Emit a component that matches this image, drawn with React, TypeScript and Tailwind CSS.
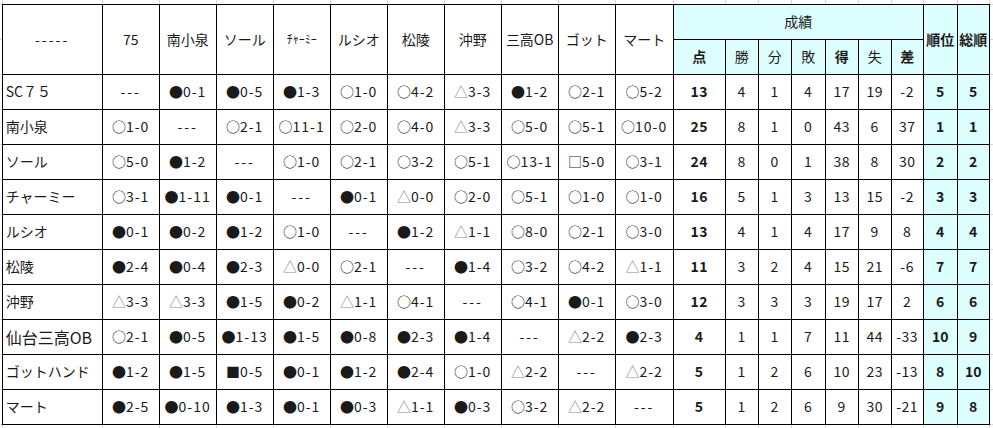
import React from "react";

const cols =
  "grid-cols-[99px_56px_56px_56px_56px_56px_56px_56px_56px_56px_57px_51px_32px_32px_33px_32px_32px_31px_33px_31px]";

const heads = ["75", "南小泉", "ソール", "ﾁｬｰﾐｰ", "ルシオ", "松陵", "沖野", "三高OB", "ゴット", "マート"];

// team, results vs each team, [点 勝 分 敗 得 失 差], 順位, 総順
const rows: { team: string; res: string[]; stats: string[]; rank: string; total: string }[] = [
  { team: "SC７５", res: ["---", "●0-1", "●0-5", "●1-3", "○1-0", "○4-2", "△3-3", "●1-2", "○2-1", "○5-2"], stats: ["13", "4", "1", "4", "17", "19", "-2"], rank: "5", total: "5" },
  { team: "南小泉", res: ["○1-0", "---", "○2-1", "○11-1", "○2-0", "○4-0", "△3-3", "○5-0", "○5-1", "○10-0"], stats: ["25", "8", "1", "0", "43", "6", "37"], rank: "1", total: "1" },
  { team: "ソール", res: ["○5-0", "●1-2", "---", "○1-0", "○2-1", "○3-2", "○5-1", "○13-1", "□5-0", "○3-1"], stats: ["24", "8", "0", "1", "38", "8", "30"], rank: "2", total: "2" },
  { team: "チャーミー", res: ["○3-1", "●1-11", "●0-1", "---", "●0-1", "△0-0", "○2-0", "○5-1", "○1-0", "○1-0"], stats: ["16", "5", "1", "3", "13", "15", "-2"], rank: "3", total: "3" },
  { team: "ルシオ", res: ["●0-1", "●0-2", "●1-2", "○1-0", "---", "●1-2", "△1-1", "○8-0", "○2-1", "○3-0"], stats: ["13", "4", "1", "4", "17", "9", "8"], rank: "4", total: "4" },
  { team: "松陵", res: ["●2-4", "●0-4", "●2-3", "△0-0", "○2-1", "---", "●1-4", "○3-2", "○4-2", "△1-1"], stats: ["11", "3", "2", "4", "15", "21", "-6"], rank: "7", total: "7" },
  { team: "沖野", res: ["△3-3", "△3-3", "●1-5", "●0-2", "△1-1", "○4-1", "---", "○4-1", "●0-1", "○3-0"], stats: ["12", "3", "3", "3", "19", "17", "2"], rank: "6", total: "6" },
  { team: "仙台三高OB", res: ["○2-1", "●0-5", "●1-13", "●1-5", "●0-8", "●2-3", "●1-4", "---", "△2-2", "●2-3"], stats: ["4", "1", "1", "7", "11", "44", "-33"], rank: "10", total: "9" },
  { team: "ゴットハンド", res: ["●1-2", "●1-5", "■0-5", "●0-1", "●1-2", "●2-4", "○1-0", "△2-2", "---", "△2-2"], stats: ["5", "1", "2", "6", "10", "23", "-13"], rank: "8", total: "10" },
  { team: "マート", res: ["●2-5", "●0-10", "●1-3", "●0-1", "●0-3", "△1-1", "●0-3", "○3-2", "△2-2", "---"], stats: ["5", "1", "2", "6", "9", "30", "-21"], rank: "9", total: "8" },
];

const Result = ({ v }: { v: string }) => {
  if (v === "---") return <span className="tracking-[2px]">---</span>;
  const sym = v[0];
  return (
    <span className="flex items-center">
      <span className={sym === "△" ? "text-[#8a8a8a]" : ""}>{sym}</span>
      <span className="tracking-[1px]">{v.slice(1)}</span>
    </span>
  );
};

const App: React.FC = () => {
  return (
    <div className="w-[993px] h-[428px] bg-white flex flex-col overflow-hidden font-['Noto_Sans_CJK_JP',sans-serif] text-[14px] text-[#1a1a1a]">
      {/* gridlines above the table */}
      <div className="flex h-[4px]">
        <div className="w-[2px]" />
        <div className={`grid ${cols} gap-x-px px-px bg-[#d6d6d6]`}>
          {Array.from({ length: 20 }).map((_, i) => (
            <div key={i} className="bg-white" />
          ))}
        </div>
      </div>

      <div className="flex">
        {/* left gridlines */}
        <div className="w-[2px] grid grid-rows-[repeat(12,34px)] gap-y-px py-px bg-[#d6d6d6]">
          {Array.from({ length: 12 }).map((_, i) => (
            <div key={i} className="bg-white" />
          ))}
        </div>

        {/* Standings table */}
        <div className={`grid ${cols} grid-rows-[repeat(12,34px)] gap-px p-px bg-black`}>
          <div className="row-span-2 bg-white flex items-center justify-center tracking-[2px]">-----</div>
          {heads.map((h, i) => (
            <div
              key={i}
              className={`row-span-2 bg-white flex items-center justify-center whitespace-nowrap ${h === "ﾁｬｰﾐｰ" ? "text-[12px]" : ""}`}
            >
              {h}
            </div>
          ))}
          <div className="col-span-7 bg-[#ddffff] flex items-center justify-center">成績</div>
          <div className="row-span-2 bg-[#ddffff] flex items-center justify-center font-bold">順位</div>
          <div className="row-span-2 bg-[#ddffff] flex items-center justify-center font-bold">総順</div>
          {["点", "勝", "分", "敗", "得", "失", "差"].map((h, i) => (
            <div
              key={h}
              className={`bg-[#ddffff] flex items-center justify-center ${[0, 4, 6].includes(i) ? "font-bold" : ""}`}
            >
              {h}
            </div>
          ))}

          {rows.map((r) => (
            <React.Fragment key={r.team}>
              <div
                className={`bg-white flex items-center pl-[3px] whitespace-nowrap ${r.team === "仙台三高OB" ? "text-[16px]" : ""}`}
              >
                {r.team}
              </div>
              {r.res.map((v, i) => (
                <div key={i} className="bg-white flex items-center justify-center whitespace-nowrap">
                  <Result v={v} />
                </div>
              ))}
              {r.stats.map((s, i) => (
                <div
                  key={"s" + i}
                  className={`bg-white flex items-center justify-center tracking-[0.5px] ${i === 0 ? "font-bold" : ""}`}
                >
                  {s}
                </div>
              ))}
              <div className="bg-[#ddffff] flex items-center justify-center font-bold">{r.rank}</div>
              <div className="bg-[#ddffff] flex items-center justify-center font-bold">{r.total}</div>
            </React.Fragment>
          ))}
        </div>

        {/* right gridlines */}
        <div className="w-[4px] grid grid-rows-[repeat(12,34px)] gap-y-px py-px bg-[#d6d6d6]">
          {Array.from({ length: 12 }).map((_, i) => (
            <div key={i} className="bg-white" />
          ))}
        </div>
      </div>

      {/* gridlines below the table */}
      <div className="flex h-[4px]">
        <div className="w-[2px]" />
        <div className={`grid ${cols} gap-x-px px-px bg-[#d6d6d6]`}>
          {Array.from({ length: 20 }).map((_, i) => (
            <div key={i} className="bg-white" />
          ))}
        </div>
      </div>
    </div>
  );
};

export default App;
